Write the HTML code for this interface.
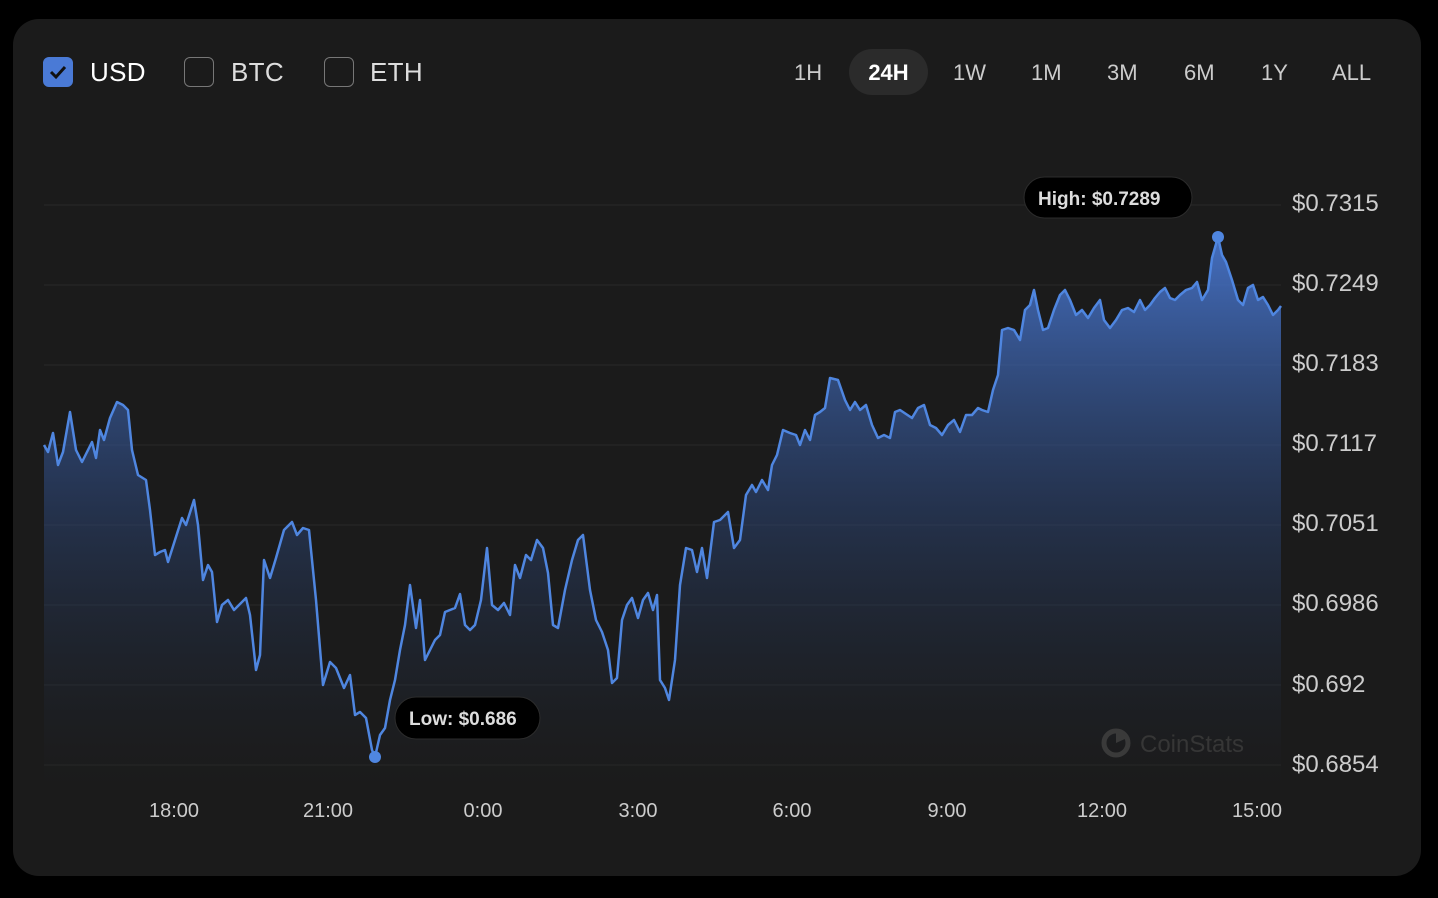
<!DOCTYPE html>
<html><head><style>
body{margin:0;background:#000;width:1438px;height:898px;overflow:hidden;font-family:"Liberation Sans",sans-serif;}
.card{position:absolute;left:13px;top:19px;width:1408px;height:857px;background:#1b1b1b;border-radius:26px;}
.cb{position:absolute;top:57px;width:30px;height:30px;border:1.5px solid #777;border-radius:6px;box-sizing:border-box;}
.lbl{position:absolute;top:57px;font-size:26px;color:#ddd;letter-spacing:0.3px}
.tab{position:absolute;top:60px;font-size:22px;color:#ccc;text-align:center;}
.y{position:absolute;left:1292px;font-size:24px;color:#ccc;}
.x{position:absolute;top:800px;font-size:20px;color:#ccc;width:100px;text-align:center;}
</style></head><body>
<div class="card"></div>
<div class="cb" style="left:43px;background:#4a7ad6;border-color:#4a7ad6"><svg width="30" height="30" style="position:absolute;left:-1px;top:-1px"><path d="M8 15 L13 20 L22 10" stroke="#111" stroke-width="3" fill="none"/></svg></div>
<div class="lbl" style="left:90px;color:#fff">USD</div>
<div class="cb" style="left:184px"></div>
<div class="lbl" style="left:231px">BTC</div>
<div class="cb" style="left:324px"></div>
<div class="lbl" style="left:370px">ETH</div>
<div style="position:absolute;left:849px;top:49px;width:79px;height:46px;border-radius:23px;background:#2b2b2b"></div>
<div class="tab" style="left:794px">1H</div>
<div class="tab" style="left:849px;width:79px;color:#fff;font-weight:bold">24H</div>
<div class="tab" style="left:953px">1W</div>
<div class="tab" style="left:1031px">1M</div>
<div class="tab" style="left:1107px">3M</div>
<div class="tab" style="left:1184px">6M</div>
<div class="tab" style="left:1261px">1Y</div>
<div class="tab" style="left:1332px">ALL</div>
<svg width="1438" height="898" style="position:absolute;left:0;top:0">
<defs><linearGradient id="g" x1="0" y1="230" x2="0" y2="785" gradientUnits="userSpaceOnUse"><stop offset="0" stop-color="#4a7ad6" stop-opacity="0.9"/><stop offset="0.5" stop-color="#2e4a80" stop-opacity="0.5"/><stop offset="1" stop-color="#1b1b1b" stop-opacity="0.2"/></linearGradient></defs>
<g stroke="#2a2a2a" stroke-width="1"><line x1="44" x2="1281" y1="205" y2="205"/><line x1="44" x2="1281" y1="285" y2="285"/><line x1="44" x2="1281" y1="365" y2="365"/><line x1="44" x2="1281" y1="445" y2="445"/><line x1="44" x2="1281" y1="525" y2="525"/><line x1="44" x2="1281" y1="605" y2="605"/><line x1="44" x2="1281" y1="685" y2="685"/><line x1="44" x2="1281" y1="765" y2="765"/></g>
<path id="p" d="M44,445 L48,452 53,433 58,465 63,452 70,412 76,450 82,462 88,450 92,442 96,458 100,430 104,440 110,418 117,402 123,405 128,410 132,450 138,475 146,480 150,510 155,555 160,552 165,550 168,562 175,540 182,518 186,525 194,500 198,525 203,580 208,565 212,572 217,622 222,605 228,600 234,610 240,604 246,598 250,615 256,670 260,655 264,560 270,578 276,558 284,530 292,522 297,535 303,528 309,530 316,600 323,685 330,662 336,668 344,688 350,675 355,715 360,712 366,718 372,750 375,757 380,735 385,728 390,700 395,680 400,650 405,625 410,585 416,628 420,600 425,660 430,650 435,640 440,635 445,612 450,610 455,608 460,594 465,625 470,630 475,625 481,600 487,548 492,605 498,610 504,603 510,615 515,565 520,578 526,555 531,560 537,540 543,548 548,573 553,625 558,628 565,590 572,560 578,540 583,535 590,590 596,620 602,632 608,650 612,683 617,678 622,620 627,605 632,598 638,618 643,600 648,593 653,610 657,595 660,680 665,688 669,700 675,660 680,585 686,548 692,550 697,572 702,548 707,578 714,522 720,520 728,512 734,548 740,540 746,495 752,485 756,492 762,480 768,490 772,465 777,455 783,430 790,433 796,435 800,445 805,430 810,440 815,415 820,412 825,408 830,378 838,380 845,400 850,410 855,402 860,410 866,405 872,425 878,438 884,435 890,438 895,412 900,410 906,414 912,418 918,408 924,405 930,425 936,428 942,435 948,425 954,420 960,432 966,415 972,415 978,408 982,410 988,412 993,390 998,375 1002,330 1008,328 1014,330 1020,340 1025,310 1030,305 1034,290 1038,310 1043,330 1048,328 1054,310 1060,295 1065,290 1070,300 1076,315 1082,310 1088,318 1094,308 1100,300 1104,320 1110,328 1116,320 1122,310 1128,308 1134,312 1140,300 1145,310 1150,305 1155,298 1160,292 1165,288 1170,298 1175,300 1180,295 1186,290 1192,288 1197,282 1202,300 1208,290 1212,258 1218,237 1222,255 1226,262 1232,280 1238,300 1243,305 1248,288 1253,285 1258,300 1263,297 1268,305 1273,315 1278,310 1281,306" fill="none"/>
<path d="M44,445 L48,452 53,433 58,465 63,452 70,412 76,450 82,462 88,450 92,442 96,458 100,430 104,440 110,418 117,402 123,405 128,410 132,450 138,475 146,480 150,510 155,555 160,552 165,550 168,562 175,540 182,518 186,525 194,500 198,525 203,580 208,565 212,572 217,622 222,605 228,600 234,610 240,604 246,598 250,615 256,670 260,655 264,560 270,578 276,558 284,530 292,522 297,535 303,528 309,530 316,600 323,685 330,662 336,668 344,688 350,675 355,715 360,712 366,718 372,750 375,757 380,735 385,728 390,700 395,680 400,650 405,625 410,585 416,628 420,600 425,660 430,650 435,640 440,635 445,612 450,610 455,608 460,594 465,625 470,630 475,625 481,600 487,548 492,605 498,610 504,603 510,615 515,565 520,578 526,555 531,560 537,540 543,548 548,573 553,625 558,628 565,590 572,560 578,540 583,535 590,590 596,620 602,632 608,650 612,683 617,678 622,620 627,605 632,598 638,618 643,600 648,593 653,610 657,595 660,680 665,688 669,700 675,660 680,585 686,548 692,550 697,572 702,548 707,578 714,522 720,520 728,512 734,548 740,540 746,495 752,485 756,492 762,480 768,490 772,465 777,455 783,430 790,433 796,435 800,445 805,430 810,440 815,415 820,412 825,408 830,378 838,380 845,400 850,410 855,402 860,410 866,405 872,425 878,438 884,435 890,438 895,412 900,410 906,414 912,418 918,408 924,405 930,425 936,428 942,435 948,425 954,420 960,432 966,415 972,415 978,408 982,410 988,412 993,390 998,375 1002,330 1008,328 1014,330 1020,340 1025,310 1030,305 1034,290 1038,310 1043,330 1048,328 1054,310 1060,295 1065,290 1070,300 1076,315 1082,310 1088,318 1094,308 1100,300 1104,320 1110,328 1116,320 1122,310 1128,308 1134,312 1140,300 1145,310 1150,305 1155,298 1160,292 1165,288 1170,298 1175,300 1180,295 1186,290 1192,288 1197,282 1202,300 1208,290 1212,258 1218,237 1222,255 1226,262 1232,280 1238,300 1243,305 1248,288 1253,285 1258,300 1263,297 1268,305 1273,315 1278,310 1281,306 L1281,785 L44,785 Z" fill="url(#g)"/>
<use href="#p" stroke="#4f86e0" stroke-width="2.5" stroke-linejoin="round"/>
<circle cx="1218" cy="237" r="6" fill="#4f86e0"/>
<circle cx="375" cy="757" r="6" fill="#4f86e0"/>
<rect x="1024" y="177" width="168" height="41" rx="20.5" fill="#000" stroke="#2c2c2c"/>
<text x="1038" y="205" font-size="19" font-weight="bold" fill="#ddd" font-family="Liberation Sans">High: $0.7289</text>
<rect x="395" y="697" width="145" height="42" rx="21" fill="#000" stroke="#2c2c2c"/>
<text x="409" y="725" font-size="19" font-weight="bold" fill="#ddd" font-family="Liberation Sans">Low: $0.686</text>
<circle cx="1116" cy="743" r="12" fill="none" stroke="#3a3a3a" stroke-width="5"/>
<path d="M1116,731 L1116,743 L1127,738 A12,12 0 0 0 1116,731Z" fill="#3a3a3a"/>
<text x="1140" y="752" font-size="24" fill="#363636" font-family="Liberation Sans">CoinStats</text>
</svg>
<div class="y" style="top:190px">$0.7315</div>
<div class="y" style="top:270px">$0.7249</div>
<div class="y" style="top:350px">$0.7183</div>
<div class="y" style="top:430px">$0.7117</div>
<div class="y" style="top:510px">$0.7051</div>
<div class="y" style="top:590px">$0.6986</div>
<div class="y" style="top:671px">$0.692</div>
<div class="y" style="top:751px">$0.6854</div>
<div class="x" style="left:124px">18:00</div>
<div class="x" style="left:278px">21:00</div>
<div class="x" style="left:433px">0:00</div>
<div class="x" style="left:588px">3:00</div>
<div class="x" style="left:742px">6:00</div>
<div class="x" style="left:897px">9:00</div>
<div class="x" style="left:1052px">12:00</div>
<div class="x" style="left:1207px">15:00</div>
</body></html>
